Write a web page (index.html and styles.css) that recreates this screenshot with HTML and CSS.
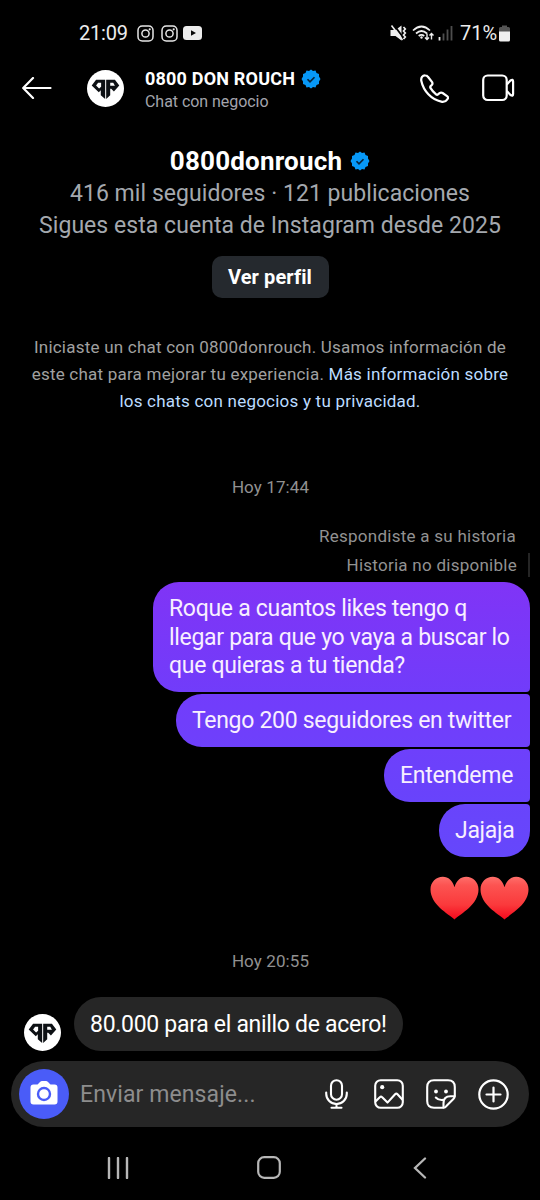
FILE: index.html
```html
<!DOCTYPE html>
<html lang="es">
<head>
<meta charset="utf-8">
<title>0800 DON ROUCH</title>
<link rel="stylesheet" href="styles.css">
</head>
<body>
<svg class="defs" width="0" height="0" aria-hidden="true">
  <defs>
    <linearGradient id="heartFill" x1="0" y1="0" x2="0" y2="1">
      <stop offset="0" stop-color="#ff6e6a"/><stop offset=".2" stop-color="#fc5351"/><stop offset=".65" stop-color="#fa3a3c"/><stop offset="1" stop-color="#f5081c"/>
    </linearGradient>
    <symbol id="logo" viewBox="0 0 110 110">
      <circle cx="55" cy="55" r="55" fill="#fff"/>
      <path fill="#0d1014" fill-rule="evenodd" d="M14 46 27 29H54V86L41 75V60L35 66ZM42 38H33L27 46 36 55 42 50Z"/>
      <path fill="#0d1014" fill-rule="evenodd" d="M57 29H83L96 46 80 64 72 56H69V75L57 86ZM69 38V47H83L78 38Z"/>
    </symbol>
    <symbol id="verified" viewBox="0 0 40 40">
      <path fill="#0798f7" d="M20 1 24 4 29 3 31 8 36 10 36 15 39 20 36 25 36 30 31 32 29 37 24 36 20 39 16 36 11 37 9 32 4 30 4 25 1 20 4 15 4 10 9 8 11 3 16 4Z"/>
      <path d="m13 20.500 5 5 9-9" fill="none" stroke="#06243c" stroke-width="3.400"/>
    </symbol>
    <symbol id="insta" viewBox="0 0 17 17">
      <g fill="none" stroke="#e6e6e6" stroke-width="1.500"><rect x="1" y="1" width="15" height="15" rx="4.300"/><circle cx="8.500" cy="8.500" r="3.600"/></g><circle cx="12.700" cy="4.300" r="1.100" fill="#e6e6e6"/>
    </symbol>
    <symbol id="heart" viewBox="0 0 49 44">
      <path fill="url(#heartFill)" d="M24.500 43.500C18 37.500.5 28.500.5 13.500.5 6 6.200.8 12.800.8c5.700 0 9.700 3.900 11.700 10.400C26.500 4.700 30.500.8 36.200.8c6.600 0 12.300 5.200 12.300 12.700 0 15-17.500 24-24 30Z"/>
    </symbol>
  </defs>
</svg>
<div class="screen">
  <div class="status">
    <span class="clock">21:09</span>
    <svg class="s-insta" width="17" height="17"><use href="#insta"/></svg>
    <svg class="s-insta2" width="17" height="17"><use href="#insta"/></svg>
    <svg class="s-yt" width="19" height="14" viewBox="0 0 19 14"><rect width="19" height="14" rx="3.500" fill="#ececec"/><path d="M8 4.200v5.600L13 7Z" fill="#080808"/></svg>
    <svg class="s-system" width="63" height="18" viewBox="0 0 63 18">
      <path fill="#eee" d="M.5 6h5l6-4.500v15l-6-4.500h-5Z"/>
      <path d="M3.500.5 14 14.500" stroke="#000" stroke-width="1.800"/><path d="m1.500 1.500 11 14.500" stroke="#eee" stroke-width="1.600"/>
      <path d="m13.500 3 1.800 2-1.800 2 1.800 2-1.800 2 1.800 2-1.800 2" fill="none" stroke="#eee" stroke-width="1.700"/>
      <g fill="none" stroke="#eee" stroke-width="1.700"><path d="M23 6.500Q31.500-1.500 40 6.500M26 9.500q5.500-5 11 0M28.700 12q2.800-2.300 5.500 0"/></g>
      <circle cx="31.500" cy="13.500" r="1.200" fill="#eee"/>
      <path d="M37 9.500v6m-2-2 2 2 2-2m2.500 2v-6m-2 2 2-2 2 2" fill="none" stroke="#eee" stroke-width="1.400"/>
      <path d="M49.500 13v3.500" stroke="#eee" stroke-width="1.800"/>
      <path d="M53.500 9.500v7M57.500 5.500v11M61.500 2v14.500" stroke="#4e4e4e" stroke-width="1.800"/>
    </svg>
    <span class="percent">71%</span>
    <svg class="s-batt" width="11" height="17" viewBox="0 0 11 17"><path fill="#555" d="M1.500 2H3V.5h5V2h1.500Q11 2 11 3.500V7H0V3.500Q0 2 1.500 2Z"/><path fill="#f0f0f0" d="M0 6.500h11v8.500q0 1.500-1.500 1.500h-8Q0 16.500 0 15Z"/></svg>
  </div>

  <header class="header">
    <svg class="back" width="30" height="22" viewBox="0 0 30 22"><path d="M11 1 1.200 11 11 21M1.500 11h27" fill="none" stroke="#fff" stroke-width="2.200" stroke-linecap="round" stroke-linejoin="round"/></svg>
    <svg class="avatar" width="37" height="37"><use href="#logo"/></svg>
    <div class="who">
      <div class="name"><span>0800 DON ROUCH</span><svg width="20" height="20"><use href="#verified"/></svg></div>
      <div class="sub">Chat con negocio</div>
    </div>
    <svg class="call" width="29" height="29" viewBox="0 0 30 30"><path d="M5.500 1.400C2.600 1.200.7 4 1.400 7.300 3.500 17.500 11.800 26.500 22 28.600c3 .6 5.300-.7 6.700-3 .6-1 .3-2-.7-2.700l-4.600-3.200c-1.100-.7-2.200-.6-3.200.2l-1.500 1.200c-.7.5-1.400.5-2.100-.1-2.400-1.900-4.500-4.300-5.800-6.600-.4-.8-.2-1.500.4-2.100l1-1c.8-.9.900-1.900.3-2.900L8.200 2.900C7.500 1.900 6.700 1.400 5.500 1.400Z" fill="none" stroke="#fff" stroke-width="2.300"/></svg>
    <svg class="video" width="33" height="28" viewBox="0 0 33 28"><g fill="none" stroke="#fff" stroke-width="2.200" stroke-linejoin="round"><rect x="1.200" y="1.500" width="23.500" height="24.500" rx="4.500"/><path d="M24.800 10.500 28.500 6.500q2.600-1.700 2.600 1v12.500q0 2.700-2.600 1l-3.700-4"/></g></svg>
  </header>

  <section class="profile">
    <div class="handle"><span>0800donrouch</span><svg width="20" height="20"><use href="#verified"/></svg></div>
    <div class="stats">416 mil seguidores · 121 publicaciones</div>
    <div class="since">Sigues esta cuenta de Instagram desde 2025</div>
    <button class="view">Ver perfil</button>
  </section>

  <p class="notice">Iniciaste un chat con 0800donrouch. Usamos información de<br>este chat para mejorar tu experiencia. <a>Más información sobre<br>los chats con negocios y tu privacidad.</a></p>

  <main class="thread">
    <div class="date">Hoy 17:44</div>
    <div class="reply">Respondiste a su historia</div>
    <div class="gone"><span>Historia no disponible</span></div>
    <div class="sent">
      <div class="bubble b1">Roque a cuantos likes tengo q<br>llegar para que yo vaya a buscar lo<br>que quieras a tu tienda?</div>
      <div class="bubble b2">Tengo 200 seguidores en twitter</div>
      <div class="bubble b3">Entendeme</div>
      <div class="bubble b4">Jajaja</div>
    </div>
    <div class="hearts"><svg width="49" height="44"><use href="#heart"/></svg><svg width="49" height="44"><use href="#heart"/></svg></div>
    <div class="date late">Hoy 20:55</div>
    <div class="received">
      <svg width="37" height="37"><use href="#logo"/></svg>
      <div class="bubble in">80.000 para el anillo de acero!</div>
    </div>
  </main>

  <div class="composer">
    <span class="camera"><svg width="28" height="26" viewBox="0 0 28 26"><path fill="#fff" d="M3.500 4.500h4L10 2q1-.9 2-.9h4q1 0 2 .9l2.500 2.500h4q3 0 3 3v14q0 3-3 3h-21q-3 0-3-3v-14q0-3 3-3Z"/><circle cx="14" cy="14" r="6" fill="none" stroke="#4a5cf8" stroke-width="2.400"/></svg></span>
    <span class="placeholder">Enviar mensaje...</span>
    <svg class="tool" width="24" height="30" viewBox="0 0 24 30"><g fill="none" stroke="#fff" stroke-width="2.100" stroke-linecap="round"><rect x="6" y="1.200" width="11" height="19.500" rx="5.500"/><path d="M1.200 13.500v1.300a10.300 10.300 0 0 0 20.600 0v-1.300M11.500 25.500v3M6.500 28.700h10"/></g></svg>
    <svg class="tool t2" width="30" height="30" viewBox="0 0 30 30"><g fill="none" stroke="#fff" stroke-width="2.100" stroke-linejoin="round"><rect x="1.200" y="1.200" width="27.600" height="27.600" rx="5.500"/><path d="m1.500 22.500 4.300-4.300q1.200-1 2.400 0l5.300 5.400 7.600-8.400q1.200-1.200 2.400 0l5 5.500"/></g><circle cx="8.200" cy="8.200" r="2.100" fill="#fff"/></svg>
    <svg class="tool t3" width="30" height="30" viewBox="0 0 30 30"><g fill="none" stroke="#fff" stroke-width="2.100" stroke-linejoin="round" stroke-linecap="round"><path d="M17.500 28.700H8q-6.800 0-6.800-6.800V8Q1.200 1.200 8 1.200h14q6.800 0 6.800 6.800v8.700q0 1.800-1.400 3.200l-7 7.200q-1.200 1.600-2.900 1.600Z"/><path d="M17.500 28.500v-4.300q0-7 7-7h4.100M9.800 18.500q2.900 3.200 7.700 2.400"/></g><circle cx="10" cy="12.500" r="1.900" fill="#fff"/><circle cx="20" cy="12.500" r="1.900" fill="#fff"/></svg>
    <svg class="tool t4" width="31" height="31" viewBox="0 0 31 31"><g fill="none" stroke="#fff" stroke-width="2.200" stroke-linecap="round"><circle cx="15.500" cy="15.500" r="14.200"/><path d="M15.500 8.500v14M8.500 15.500h14"/></g></svg>
  </div>

  <nav class="nav">
    <svg width="22" height="22" viewBox="0 0 22 22"><path d="M2 1v20M11 1v20M20 1v20" stroke="#b7b7b7" stroke-width="2.400" stroke-linecap="round"/></svg>
    <svg class="home" width="24" height="23" viewBox="0 0 24 23"><rect x="1.200" y="1.200" width="21.600" height="20.600" rx="6" fill="none" stroke="#b7b7b7" stroke-width="2.200"/></svg>
    <svg class="prev" width="14" height="22" viewBox="0 0 14 22"><path d="M12 1.500 2 11l10 9.500" fill="none" stroke="#b7b7b7" stroke-width="2.300" stroke-linecap="round"/></svg>
  </nav>
</div>
</body>
</html>
```
FILE: styles.css
```css
* { box-sizing: border-box; }
body { margin: 0; background: #000; font-family: Roboto, sans-serif; color: #fff; }
svg { display: block; flex: none; }
.defs { position: absolute; }
.screen { width: 540px; height: 1200px; overflow: hidden; display: flex; flex-direction: column; background: #000; white-space: nowrap; }
.status { height: 66px; flex: none; display: flex; align-items: center; padding-left: 79px; color: #ededed; font-size: 20px; }
.clock { width: 58px; letter-spacing: -0.2px; }
.s-insta2 { margin-left: 7px; }
.s-yt { margin-left: 5px; }
.s-system { margin-left: 188px; }
.percent { width: 39px; margin-left: 7px; }

.header { height: 44px; flex: none; display: flex; align-items: center; padding-left: 22px; }
.avatar { margin-left: 35px; }
.who { width: 275px; margin-left: 21px; padding-top: 4px; }
.name { display: flex; align-items: center; gap: 6px; height: 25px; font-size: 18px; font-weight: 700; letter-spacing: 0.2px; }
.sub { height: 23px; line-height: 22px; font-size: 16px; color: #a3a4ac; letter-spacing: -0.05px; }
.video { margin-left: 33px; }

.profile { height: 188px; flex: none; display: flex; flex-direction: column; align-items: center; padding-top: 34px; }
.handle { display: flex; align-items: center; gap: 8px; height: 34px; font-size: 26px; font-weight: 700; letter-spacing: 0.2px; }
.stats, .since { height: 31px; line-height: 32px; font-size: 23px; color: #a4a8ae; letter-spacing: 0.05px; }
.since { line-height: 33px; }
.view { margin-top: 16px; width: 117px; height: 42px; flex: none; padding: 0; border: 0; border-radius: 10px; background: #25292e; color: #fff; font: 700 20px Roboto, sans-serif; letter-spacing: 0.1px; }

.notice { margin: 36px 0 0; flex: none; text-align: center; font-size: 17px; line-height: 27px; letter-spacing: 0.22px; color: #a0a0a0; }
.notice a { color: #bcdcff; }

.thread { flex: none; height: 645px; padding: 60px 10px 0 24px; }
.date { height: 24px; line-height: 24px; text-align: center; font-size: 17px; letter-spacing: 0.1px; color: #919191; padding-right: 13px; }
.reply { margin-top: 25px; height: 24px; line-height: 24px; text-align: right; padding-right: 14px; font-size: 17px; letter-spacing: 0.26px; color: #929292; }
.gone { display: flex; justify-content: flex-end; margin-top: 5px; }
.gone span { height: 24px; line-height: 25px; font-size: 17px; letter-spacing: 0.26px; color: #929292; padding-right: 11px; border-right: 2px solid #252525; }
.sent { display: flex; flex-direction: column; align-items: flex-end; gap: 2px; margin-top: 5px; }
.bubble { font-size: 23px; line-height: 28.5px; padding: 13px 16px 11px; color: #fff; letter-spacing: -0.3px; }
.sent .bubble { border-radius: 26px 4px 4px 26px; color: #f8efff; }
.sent .b1 { width: 377px; height: 110px; border-top-right-radius: 26px; background: linear-gradient(#8034f6, #713cfa); }
.sent .b2 { width: 354px; height: 53px; background: linear-gradient(#723cfb, #6e40fb); }
.sent .b3 { width: 146px; height: 52.500px; background: linear-gradient(#6e40fb, #6843fb); }
.sent .b4 { width: 91px; height: 53px; border-bottom-right-radius: 26px; background: linear-gradient(#6944fb, #6547fb); }
.hearts { display: flex; justify-content: flex-end; gap: 1px; margin-top: 19.500px; padding-right: 1px; }
.late { margin-top: 29px; }
.received { display: flex; align-items: flex-end; gap: 13px; margin-top: 24px; }
.in { width: 329px; height: 54px; border-radius: 27px; background: #262626; }
.received .in { padding-top: 14px; }

.composer { margin: 1px 11px 0; height: 66px; flex: none; border-radius: 33px; background: #262626; display: flex; align-items: center; padding-left: 8px; }
.camera { width: 50px; height: 50px; border-radius: 50%; background: #4a5cf8; display: grid; place-items: center; padding-bottom: 2px; }
.placeholder { width: 245px; margin-left: 11px; font-size: 23px; letter-spacing: 0.1px; color: #8d8d8d; }
.t2 { margin-left: 25px; }
.t3 { margin-left: 22px; }
.t4 { margin-left: 22px; }

.nav { height: 74px; flex: none; display: flex; align-items: center; padding: 7px 0 0 107px; }
.home { margin-left: 128px; }
.prev { margin-left: 132px; }
```
